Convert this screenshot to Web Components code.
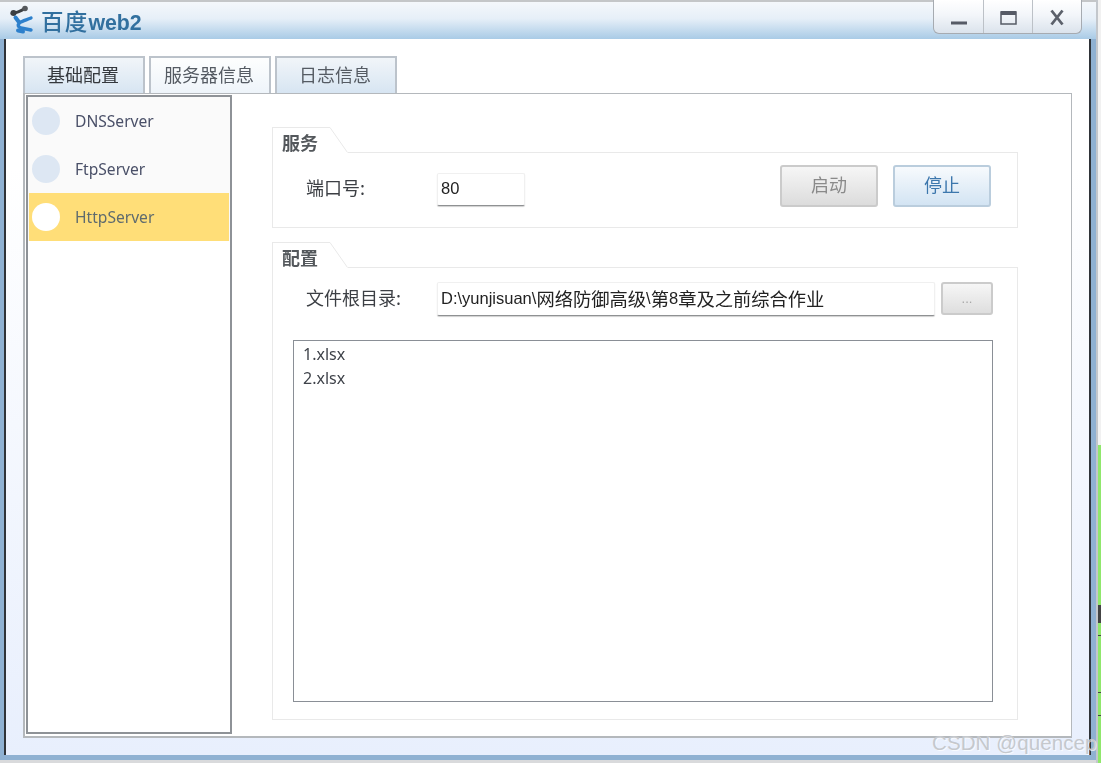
<!DOCTYPE html>
<html lang="zh-CN">
<head>
<meta charset="utf-8">
<title>百度web2</title>
<style>
  html, body { margin: 0; height: 763px; overflow: hidden; background: #fff; }
  body {
    display: flex;
    font-family: "Liberation Sans", "Noto Sans CJK SC", sans-serif;
  }
</style>
</head>
<body>
<app-window>
  <tab-strip>
    <tab-item look="blue" strong>基础配置</tab-item>
    <tab-item look="pale">服务器信息</tab-item>
    <tab-item look="blue">日志信息</tab-item>
  </tab-strip>
  <tab-panel>
    <server-list slot="side">
      <server-item>DNSServer</server-item>
      <server-item>FtpServer</server-item>
      <server-item selected>HttpServer</server-item>
    </server-list>
    <group-box caption="服务" tabwidth="58">
      <form-row>
        <field-label>端口号:</field-label>
        <text-field style="width:88px;height:33px;margin-top:8px">80</text-field>
        <glass-button slot="end" look="grey">启动</glass-button>
        <glass-button slot="end" look="blue">停止</glass-button>
      </form-row>
    </group-box>
    <group-box caption="配置" tabwidth="58" grow>
      <path-row>
        <field-label>文件根目录:</field-label>
        <text-field style="flex:1;height:34px">D:\yunjisuan\<span style="font-size:18.3px">网络防御高级</span>\<span style="font-size:18.3px">第</span>8<span style="font-size:18.3px">章及之前综合作业</span></text-field>
        <glass-button look="dots">...</glass-button>
      </path-row>
      <file-list>
        <div>1.xlsx</div>
        <div>2.xlsx</div>
      </file-list>
    </group-box>
  </tab-panel>
</app-window>
<desktop-edge></desktop-edge>
<water-mark>CSDN @quencep</water-mark>

<script>
'use strict';
const define = (name, css, html) => {
  customElements.define(name, class extends HTMLElement {
    constructor() {
      super();
      this.attachShadow({mode: 'open'}).innerHTML =
        `<style>${css}</style>${typeof html === 'function' ? html(this) : html}`;
    }
  });
};

define('app-window', `
  :host {
    display: flex; flex-direction: column; flex: none;
    width: 1098px; height: 763px; box-sizing: border-box;
    background: #8fb1d2;
    border-right: 2px solid #c3c7cc;
    filter: blur(.5px);
  }
  .bar {
    flex: none; height: 37px; display: flex; align-items: flex-start;
    border-top: 2px solid #c4c6c8;
    background: linear-gradient(#f4f7fb, #e6eff8 45%, #a9cbe6);
  }
  .logo { margin: 3px 0 0 9px; flex: none; }
  .cap {
    margin: 3px 0 0 6px; display: flex; align-items: baseline;
    color: #32709f;
    font: bold 21.3px/30px "Liberation Sans", sans-serif;
  }
  .cap b {
    font: 500 22.5px/30px "Noto Sans CJK SC", sans-serif; letter-spacing: 1.2px;
  }
  window-controls { margin: -2px 14px 0 auto; }
  .client {
    flex: none; height: 716px; box-sizing: border-box;
    margin: 0 5px 0 4px; padding: 17px;
    display: flex; flex-direction: column;
    border-left: 2px solid #2f3338; border-right: 2px solid #2f3338;
    background: linear-gradient(#fff, #fff 18%, #e8effd);
  }
  .foot { flex: none; height: 3px; margin-top: 5px; background: #d9dadc; }
`, () => `
  <div class="bar">
    <svg class="logo" width="26" height="30" viewBox="0 0 26 30" fill="none" stroke-linecap="round">
      <path d="M3 8.500 C7 8 11 6.500 16 3.500" stroke="#3c3f42" stroke-width="3"/>
      <circle cx="4.500" cy="8" r="3" fill="#3c3f42"/>
      <circle cx="16" cy="3.500" r="2.800" fill="#55585c"/>
      <path d="M22 13 C17 15 13 16 11 17.500 C8 20 9 22 12 23 L22 25" stroke="#2d80cc" stroke-width="3.400"/>
      <path d="M6.500 12.500 L9.500 16.500 M9 25.500 L14 26.500" stroke="#2d80cc" stroke-width="4"/>
    </svg>
    <span class="cap"><b>百度</b>web2</span>
    <window-controls></window-controls>
  </div>
  <div class="client"><slot></slot></div>
  <div class="foot"></div>
`);

define('window-controls', `
  :host {
    display: flex; height: 34px; box-sizing: border-box; flex: none;
    border: 1px solid #a6abb1; border-top: 0;
    border-radius: 0 0 6px 6px;
    background: linear-gradient(#fff, #f3f6fa 45%, #dbe3ec);
  }
  div { width: 49px; box-sizing: border-box; display: flex; align-items: center; justify-content: center; }
  div + div { border-left: 1px solid #bcc1c7; }
`, `
  <div><svg width="16" height="24" viewBox="0 0 16 24"><rect y="16.500" width="16" height="3" fill="#565b66"/></svg></div>
  <div><svg width="17" height="24" viewBox="0 0 17 24"><rect x="1" y="7" width="15" height="12" fill="none" stroke="#565b66" stroke-width="1.500"/><rect x="1" y="6" width="15" height="4" fill="#565b66"/></svg></div>
  <div><svg width="14" height="24" viewBox="0 0 14 24"><path d="M1.500 5.500 L12.500 19.500 M12.500 5.500 L1.500 19.500" stroke="#5c616b" stroke-width="2.800" fill="none"/></svg></div>
`);

define('tab-strip', `
  :host { display: flex; gap: 4px; height: 37px; flex: none; }
`, `<slot></slot>`);

define('tab-item', `
  :host {
    display: flex; align-items: center; justify-content: center;
    width: 122px; box-sizing: border-box; padding: 0 2px 3px 0;
    border: solid #bcc3cb; border-width: 2px 2px 0 2px;
    font: 18px "Noto Sans CJK SC", sans-serif; color: #555b63;
    background: linear-gradient(#f1f5f9, #d7e5f2);
  }
  :host([look=pale]) { background: linear-gradient(#fdfefe, #eef4fa); }
  :host([strong]) { color: #34383d; }
`, `<slot></slot>`);

define('tab-panel', `
  :host {
    display: flex; flex: 1; min-height: 0; box-sizing: border-box;
    border: solid #b4b8bc; border-width: 1px 1px 2px 2px;
    padding: 1px 0 2px 1px;
    background: #fff;
  }
  .main {
    flex: 1; min-width: 0; display: flex; flex-direction: column; gap: 14px;
    padding: 32px 53px 14px 40px;
  }
`, `<slot name="side"></slot><div class="main"><slot></slot></div>`);

define('server-list', `
  :host {
    display: block; width: 206px; flex: none; box-sizing: border-box;
    border: 2px solid #8e9297;
    background: #fff;
  }
`, `<slot></slot>`);

define('server-item', `
  :host { display: block; background: #fafafa; }
  .row {
    display: flex; align-items: center; height: 48px; margin: 0 1px; padding-left: 3px;
    font: 15.6px "Noto Sans", sans-serif; color: #4a5068;
  }
  :host([selected]) .row { background: #ffde78; color: #5f6b6e; }
  i { width: 28px; height: 28px; border-radius: 50%; background: #dde7f3; margin-right: 15px; }
  :host([selected]) i { background: #fff; }
`, `<div class="row"><i></i><span><slot></slot></span></div>`);

define('group-box', `
  :host { display: flex; flex-direction: column; flex: none; }
  :host([grow]) { flex: 1; min-height: 0; }
  .head { display: flex; height: 26px; flex: none; }
  .tab {
    box-sizing: border-box; padding: 1px 0 0 9px;
    border: solid #e9e9e9; border-width: 1px 0 0 1px;
    font: bold 18px/26px "Noto Sans CJK SC", sans-serif; color: #54585c;
  }
  .rest { flex: 1; border-bottom: 1px solid #e9e9e9; }
  .body {
    flex: 1; display: flex; flex-direction: column; min-height: 0;
    border: 1px solid #e9e9e9; border-top: 0;
  }
`, self => `
  <div class="head">
    <div class="tab" style="width:${self.getAttribute('tabwidth')}px">${self.getAttribute('caption')}</div>
    <svg width="18" height="26" viewBox="0 0 18 26"><path d="M0 .5 L17.500 25.500" stroke="#e9e9e9" fill="none"/></svg>
    <div class="rest"></div>
  </div>
  <div class="body"><slot></slot></div>
`);

define('form-row', `
  :host { display: flex; align-items: flex-start; padding: 12px 26px 20px 33px; height: 42px; }
  .end { margin-left: auto; display: flex; gap: 15px; }
  ::slotted(field-label) { width: 131px; margin-top: 8px; }
`, `<slot></slot><div class="end"><slot name="end"></slot></div>`);

define('path-row', `
  :host { display: flex; align-items: flex-start; gap: 6px; padding: 14px 24px 0 33px; flex: none; }
  ::slotted(field-label) { width: 125px; margin-top: 1px; }
`, `<slot></slot>`);

define('field-label', `
  :host { display: block; flex: none; font: 18px/28px "Noto Sans CJK SC", sans-serif; color: #3c3f44; }
`, `<slot></slot>`);

define('text-field', `
  :host {
    display: flex; align-items: center; box-sizing: border-box; padding: 0 3px 2px;
    background: #fff;
    border: 1px solid #f0f0f0; border-bottom: 1px solid #8f9193;
    border-radius: 2px;
    box-shadow: 0 1px 1px #d0d0d0;
    font: 16.5px "Liberation Sans", "Noto Sans CJK SC", sans-serif; color: #222;
    white-space: pre;
  }
`, `<slot></slot>`);

define('glass-button', `
  :host {
    display: flex; align-items: center; justify-content: center; flex: none;
    width: 98px; height: 42px; box-sizing: border-box; padding-bottom: 4px;
    border: 2px solid #cbcbcb; border-radius: 3px;
    font: 18px "Noto Sans CJK SC", sans-serif; color: #8a8a8a;
    background: linear-gradient(#f6f6f6, #dcdcdc);
  }
  :host([look=blue]) {
    border-color: #bacddd; color: #3c77ad;
    background: linear-gradient(#f7fafd, #d3e4f3);
  }
  :host([look=dots]) {
    width: 52px; height: 33px; padding: 0; font: 13px "Liberation Sans", sans-serif; color: #a8a8a8;
    background: linear-gradient(#f6f6f6, #dedede);
  }
`, `<slot></slot>`);

define('file-list', `
  :host {
    display: block; flex: none; height: 362px; box-sizing: border-box;
    margin: 24px 24px 0 20px; padding: 1px 9px;
    border: 1px solid #8a8f96;
    font: 16px/24px "Noto Sans", sans-serif; color: #3f434a;
    background: #fff;
  }
`, `<slot></slot>`);

define('desktop-edge', `
  :host { display: flex; flex-direction: column; flex: none; width: 3px; height: 763px; }
  .up { height: 445px; background: #f1f1f1; }
  .down {
    flex: 1; background-color: #90e76c;
    background-image: linear-gradient(#444, #444), linear-gradient(#444, #444), linear-gradient(#444, #444), linear-gradient(#444, #444);
    background-repeat: no-repeat;
    background-size: 3px 18px, 3px 1px, 3px 1px, 3px 1px;
    background-position: 0 160px, 0 190px, 0 247px, 0 270px;
  }
`, `<div class="up"></div><div class="down"></div>`);

define('water-mark', `
  :host {
    position: absolute; left: 932px; top: 731px;
    font: 20.5px/24px "Liberation Sans", sans-serif; color: #c5c8cd;
    text-shadow: 1px 1px 0 rgba(255,255,255,.7);
    white-space: nowrap; letter-spacing: .1px;
  }
`, `<slot></slot>`);
</script>
</body>
</html>
